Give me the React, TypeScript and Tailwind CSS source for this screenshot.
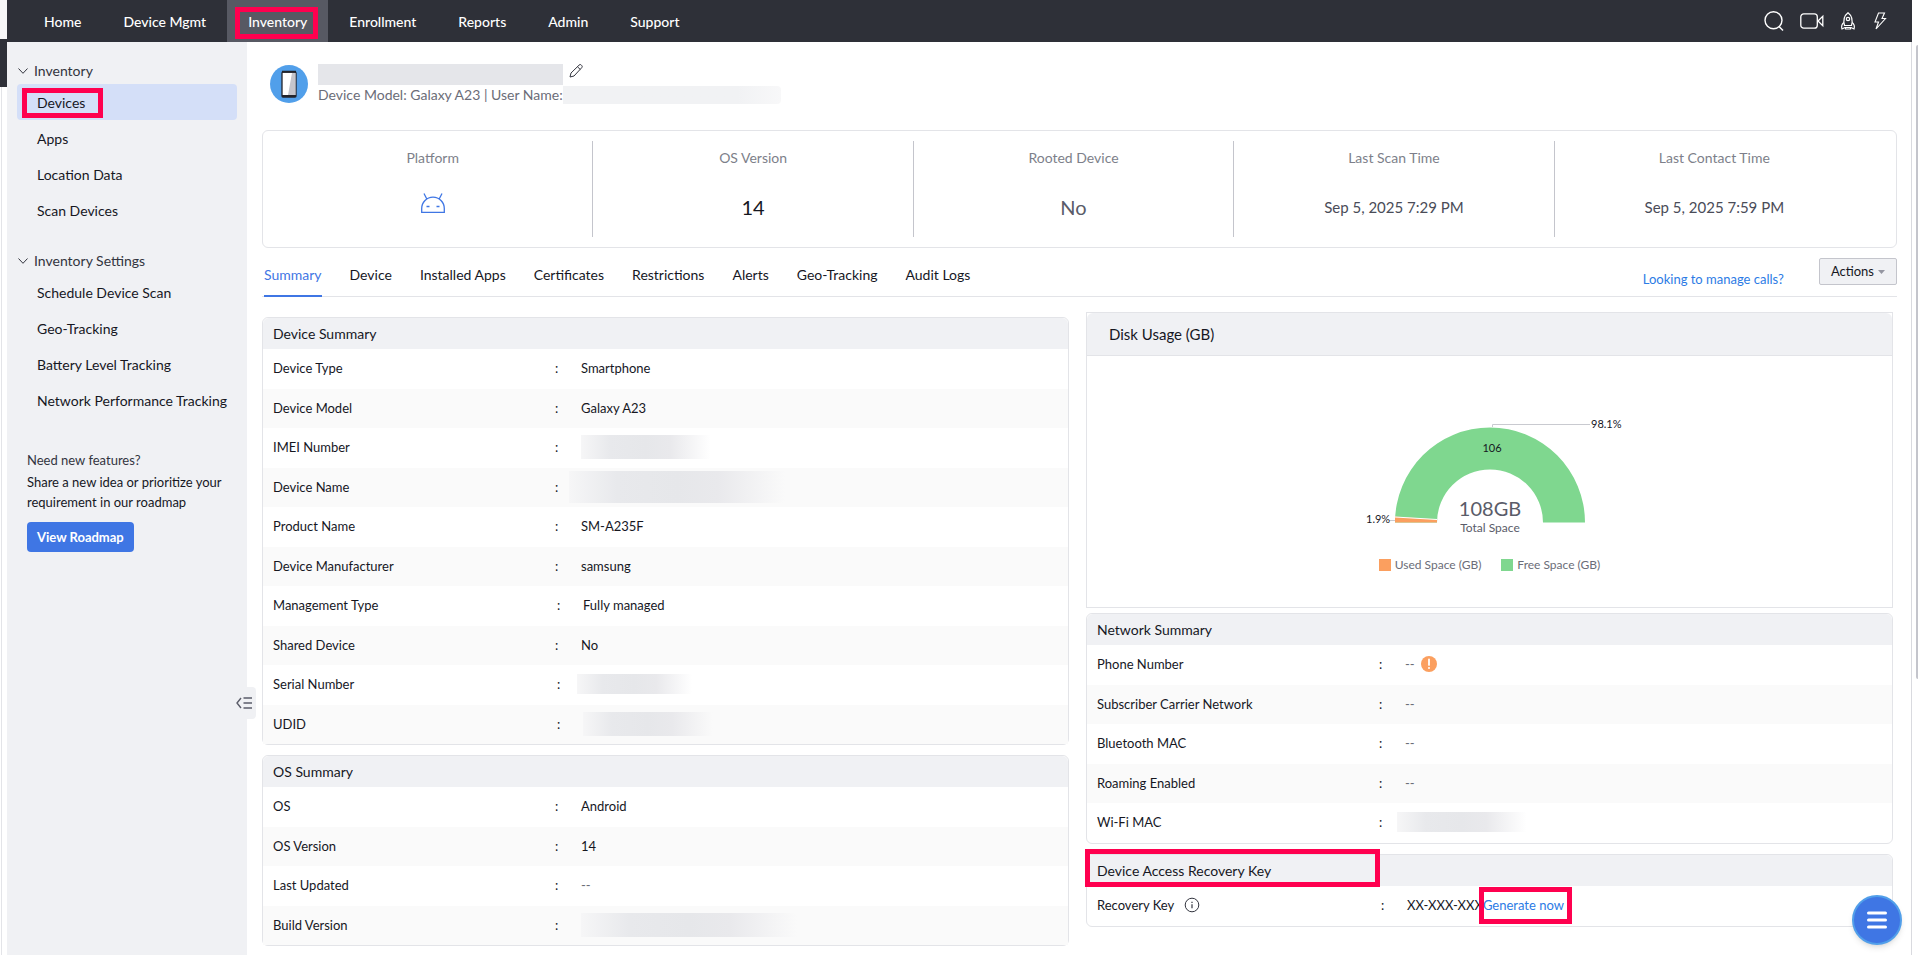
import { clsx } from "clsx";
import type { ReactNode } from "react";

const navItems = ["Home", "Device Mgmt", "Inventory", "Enrollment", "Reports", "Admin", "Support"];
const inventoryLinks = ["Devices", "Apps", "Location Data", "Scan Devices"];
const settingsLinks = ["Schedule Device Scan", "Geo-Tracking", "Battery Level Tracking", "Network Performance Tracking"];
const tabs = ["Summary", "Device", "Installed Apps", "Certificates", "Restrictions", "Alerts", "Geo-Tracking", "Audit Logs"];

type Row = { label: ReactNode; value: ReactNode; shifted?: boolean };

function Redacted({ className }: { className: string }) {
  return (
    <span
      className={clsx(
        "block bg-[linear-gradient(to_right,#f6f6f7,#e8e9ec_20%,#e6e7ea_45%,#e9e9ec_62%,transparent_90%)]",
        className
      )}
    />
  );
}

function Highlight({ className }: { className: string }) {
  return <span className={clsx("pointer-events-none absolute border-5 border-[#ff004f]", className)} />;
}

const dash = <span className="text-[#6b6d78]">--</span>;

const deviceRows: Row[] = [
  { label: "Device Type", value: "Smartphone" },
  { label: "Device Model", value: "Galaxy A23" },
  { label: "IMEI Number", value: <Redacted className="h-6 w-36" /> },
  { label: "Device Name", value: <Redacted className="-ml-3 h-8 w-60" /> },
  { label: "Product Name", value: "SM-A235F" },
  { label: "Device Manufacturer", value: "samsung" },
  { label: "Management Type", value: "Fully managed", shifted: true },
  { label: "Shared Device", value: "No" },
  { label: "Serial Number", value: <Redacted className="-ml-1.5 h-5 w-32" />, shifted: true },
  { label: "UDID", value: <Redacted className="h-6 w-36" />, shifted: true },
];

const osRows: Row[] = [
  { label: "OS", value: "Android" },
  { label: "OS Version", value: "14" },
  { label: "Last Updated", value: dash },
  { label: "Build Version", value: <Redacted className="h-6 w-60" /> },
];

const networkRows: Row[] = [
  {
    label: "Phone Number",
    value: (
      <span className="flex items-center gap-1.5">
        {dash}
        <svg className="size-4" viewBox="0 0 16 16" aria-label="Warning">
          <circle cx="8" cy="8" r="8" fill="#fb9f5f" />
          <path d="M8 3.5v5.4" stroke="#fff" strokeWidth="1.8" strokeLinecap="round" />
          <circle cx="8" cy="12" r="1" fill="#fff" />
        </svg>
      </span>
    ),
  },
  { label: "Subscriber Carrier Network", value: dash },
  { label: "Bluetooth MAC", value: dash },
  { label: "Roaming Enabled", value: dash },
  { label: "Wi-Fi MAC", value: <Redacted className="-ml-2 h-5 w-36" /> },
];

const recoveryRows: Row[] = [
  {
    label: (
      <span className="flex items-center gap-2.5">
        Recovery Key
        <svg className="size-4" viewBox="0 0 16 16" fill="none" stroke="#33353f" aria-label="Info">
          <circle cx="8" cy="8" r="6.8" />
          <path d="M8 7.2v4M8 4.8v1.2" strokeWidth="1.2" />
        </svg>
      </span>
    ),
    value: (
      <span className="flex">
        XX-XXX-XXX
        <a href="#generate" className="relative text-[#2c7be5]">
          Generate now
          <Highlight className="-top-2 -right-2 -bottom-[9px] -left-1" />
        </a>
      </span>
    ),
    shifted: true,
  },
];

function InfoCard({ title, rows, highlighted }: { title: string; rows: Row[]; highlighted?: boolean }) {
  return (
    <section className="rounded-md border border-[#e3e4e8]">
      <h2 className="relative flex h-[31px] items-center rounded-t-md bg-[#f0f1f4] px-2.5 text-sm">
        {title}
        {highlighted && <Highlight className="-top-1.5 -left-0.5 h-[38px] w-[295px]" />}
      </h2>
      <table className="w-full table-fixed text-left text-[13px] leading-5">
        <tbody>
          {rows.map((row, i) => (
            <tr key={i} className="h-10 even:h-[39px] even:bg-[#fafafa]">
              <th scope="row" className="w-[290px] p-0 pb-0.5 pl-2.5 font-normal">{row.label}</th>
              <td className={clsx("w-7 p-0 pb-0.5", row.shifted ? "pl-1" : "pl-0.5")}>:</td>
              <td className={clsx("p-0 pb-0.5", row.shifted && "pl-0.5")}>{row.value}</td>
            </tr>
          ))}
        </tbody>
      </table>
    </section>
  );
}

function DiskUsage() {
  return (
    <section className="mb-[5px] border border-[#e3e4e8]">
      <h2 className="flex h-[43px] items-center rounded-t-md border-b border-[#e3e4e8] bg-[#f0f1f4] px-[22px] text-[15px]">
        Disk Usage (GB)
      </h2>
      <div className="flex h-[251px] flex-col items-center">
        <svg className="mt-[51px] h-[140px] w-[280px]" viewBox="0 0 280 140" fontFamily="Lato, sans-serif">
          <path d="M45 115.500A95 95 0 0 1 235 115.500H193A53 53 0 0 0 87 115.500Z" fill="#7fd78f" />
          <path d="M45 109.500L87 112.500V115.500H45Z" fill="#fb9f5f" />
          <path d="M45 110L87 112.500" stroke="#fff" strokeWidth="1" />
          <path d="M142.500 20v-2.500H240M39 113.500h6" fill="none" stroke="#c9cad0" />
          <text x="241" y="21" fontSize="11" fill="#16171f">98.1%</text>
          <text x="142" y="45" fontSize="11" fill="#16171f" textAnchor="middle">106</text>
          <text x="16" y="116" fontSize="11" fill="#16171f">1.9%</text>
          <text x="140" y="109" fontSize="20" fill="#5a5c69" textAnchor="middle">108GB</text>
          <text x="140" y="125" fontSize="12" fill="#5a5c69" textAnchor="middle">Total Space</text>
        </svg>
        <div className="mt-2.5 flex gap-5 text-xs text-[#6b6d78]">
          <span className="flex items-center gap-1">
            <i className="size-3 bg-[#fb9f5f]" />
            Used Space (GB)
          </span>
          <span className="flex items-center gap-1">
            <i className="size-3 bg-[#7fd78f]" />
            Free Space (GB)
          </span>
        </div>
      </div>
    </section>
  );
}

function SideSection({ title, links, active }: { title: string; links: string[]; active?: string }) {
  return (
    <div>
      <button className="flex h-[26px] items-center gap-1.5 pl-[11px] text-sm text-[#33353f]">
        <svg className="w-2.5" viewBox="0 0 10 6" fill="none" stroke="currentColor">
          <path d="M.5 .5L5 5.300L9.500 .5" />
        </svg>
        {title}
      </button>
      {links.map((link) => (
        <a
          key={link}
          href="#"
          className={clsx("mx-2.5 flex h-9 items-center rounded pt-0.5 pl-5 text-sm whitespace-nowrap", link === active && "bg-[#d4dff8]")}
        >
          <span className="relative">
            {link}
            {link === active && <Highlight className="-top-[5px] -right-[18px] -bottom-[5px] -left-[15px]" />}
          </span>
        </a>
      ))}
    </div>
  );
}

function Stat({ label, children, last }: { label: string; children: ReactNode; last?: boolean }) {
  return (
    <div className={clsx("flex h-24 flex-1 flex-col items-center", !last && "border-r border-[#c4c5cc]")}>
      <span className="mt-[7px] text-sm text-[#7d7f8a]">{label}</span>
      <div className="mt-[23px] flex h-8 items-center">{children}</div>
    </div>
  );
}

export default function App() {
  return (
    <div className="relative flex min-h-screen font-['Lato',sans-serif] text-[#16171f]">
      {/* Edge of the window behind */}
      <div className="flex w-[7px] flex-col">
        <div className="h-[39px] bg-[#f7f7f8]" />
        <div className="h-12 bg-[#2e3038]" />
        <div className="ml-px w-px flex-1 bg-[#e3e4e8]" />
      </div>

      <div className="flex flex-1 flex-col">
        {/* Top bar */}
        <header className="flex h-[42px] items-center justify-between bg-[#2e3038] pr-6 pl-4">
          <nav className="flex h-full">
            {navItems.map((item) => (
              <a
                key={item}
                href="#"
                className={clsx(
                  "relative flex items-center px-[21px] pt-0.5 text-sm font-medium text-white",
                  item === "Inventory" && "bg-[#575963]"
                )}
              >
                {item}
                {item === "Inventory" && <Highlight className="top-[7px] right-2.5 bottom-[3px] left-2" />}
              </a>
            ))}
          </nav>
          <div className="flex items-center gap-4 text-white">
            <button aria-label="Search">
              <svg className="size-5" viewBox="0 0 20 20" fill="none" stroke="currentColor" strokeWidth="1.4">
                <circle cx="9.500" cy="9.300" r="8.500" />
                <path d="M15 15.500L19 19.500" />
              </svg>
            </button>
            <button aria-label="Video">
              <svg className="h-4 w-6" viewBox="0 0 24 16" fill="none" stroke="currentColor" strokeWidth="1.3">
                <rect x=".8" y=".8" width="16.500" height="14.400" rx="3" />
                <path d="M18 8l4.800-4.800v9.600z" />
              </svg>
            </button>
            <button aria-label="What's new">
              <svg className="h-[18px] w-4" viewBox="0 0 16 18" fill="none" stroke="currentColor" strokeWidth="1.2">
                <path d="M4.500 13.500C3 8 4.500 3.500 8 .8c3.500 2.700 5 7.200 3.500 12.700z" />
                <circle cx="8" cy="7" r="1.700" />
                <path d="M3.800 10.500C2 12 1.200 14.500 2 17l3-1.500h6l3 1.500c.8-2.500 0-5-1.800-6.500M5.500 15.500V17h5v-1.500" />
              </svg>
            </button>
            <button aria-label="Quick actions">
              <svg className="h-[18px] w-4" viewBox="0 0 16 18" fill="none" stroke="currentColor" strokeWidth="1.100">
                <path d="M6.500 1h6l-2.500 5.500h3.500L4 17l2.500-7H3z" />
              </svg>
            </button>
          </div>
        </header>

        <div className="flex flex-1">
          {/* Side menu */}
          <aside className="relative flex w-60 shrink-0 flex-col bg-[#f0f1f4] pt-4">
            <SideSection title="Inventory" links={inventoryLinks} active="Devices" />
            <div className="mt-5">
              <SideSection title="Inventory Settings" links={settingsLinks} />
            </div>
            <div className="mt-8 px-5 text-[13px] leading-5">
              <p className="text-[#33353f]">Need new features?</p>
              <p className="mt-0.5">Share a new idea or prioritize your requirement in our roadmap</p>
              <button className="mt-2.5 h-[30px] rounded bg-[#3f76e4] px-2.5 font-bold text-white">View Roadmap</button>
            </div>
            <button aria-label="Collapse menu" className="absolute top-[645px] -right-[9px] flex h-8 w-6 items-center justify-center rounded-r bg-[#f0f1f4]">
              <svg className="h-3 w-4" viewBox="0 0 16 12" fill="none" stroke="#5a5c69" strokeWidth="1.400">
                <path d="M5 1L1 6l4 5M7.500 1H16M7.500 6H16M7.500 11H16" />
              </svg>
            </button>
          </aside>

          <main className="flex-1 border-r border-[#d9dadf] pr-3.5 pl-[15px]">
            {/* Device heading */}
            <div className="flex h-[88px] items-center gap-2.5 pb-1 pl-2">
              <svg className="size-[38px]" viewBox="0 0 38 38">
                <circle cx="19" cy="19" r="19" fill="#519fea" />
                <rect x="12" y="7" width="14" height="25" rx="1" fill="#fff" stroke="#22242c" strokeWidth="1.300" />
                <path d="M22 8h3.500v22H18z" fill="#c4c5cc" />
                <path d="M12 6.800h14M12 31h14" stroke="#22242c" strokeWidth="2" />
              </svg>
              <div className="flex flex-col">
                <div className="flex items-start gap-1.5">
                  <div className="h-[21px] w-[245px] bg-[#e5e6ea]" />
                  <button aria-label="Rename">
                    <svg className="size-3.5" viewBox="0 0 14 14" fill="none" stroke="#33353f">
                      <path d="M1 13l1-4L10 1.200a1.500 1.500 0 0 1 2.400 0l.4 .4a1.500 1.500 0 0 1 0 2L5 12zM8.500 2.800L11.300 5.500" />
                    </svg>
                  </button>
                </div>
                <div className="flex items-center text-sm leading-5 text-[#6b6d78]">
                  Device Model: Galaxy A23 | User Name:
                  <span className="h-[18px] w-[218px] rounded-r bg-linear-to-r from-[#f1f2f4] from-80% to-[#f8f8f9]" />
                </div>
              </div>
            </div>

            {/* Overview */}
            <div className="flex h-[118px] items-center rounded-md border border-[#e3e4e8] pr-[22px] pl-2.5">
              <Stat label="Platform">
                <svg className="mb-2 h-5 w-6" viewBox="0 0 24 20" fill="none" stroke="#3f76e4" strokeWidth="1.300">
                  <path d="M.7 19.300V15.500a11.300 11.300 0 0 1 22.600 0v3.800zM5.800 6L3 .5M18.200 6L21 .5M5.500 13.500h3M15.500 13.500h3" />
                </svg>
              </Stat>
              <Stat label="OS Version"><span className="text-xl">14</span></Stat>
              <Stat label="Rooted Device"><span className="text-xl text-[#5a5c69]">No</span></Stat>
              <Stat label="Last Scan Time"><span className="text-[15px] text-[#4a4c58]">Sep 5, 2025 7:29 PM</span></Stat>
              <Stat label="Last Contact Time" last><span className="text-[15px] text-[#4a4c58]">Sep 5, 2025 7:59 PM</span></Stat>
            </div>

            {/* Tabs */}
            <div className="flex h-[49px] items-end justify-between border-b border-[#e3e4e8]">
              <nav className="flex gap-7 pl-0.5">
                {tabs.map((tab) => (
                  <a
                    key={tab}
                    href="#"
                    className={clsx(
                      "-mb-px flex h-8 items-start border-b-2 text-sm",
                      tab === "Summary" ? "border-[#3f76e4] text-[#3f76e4]" : "border-transparent"
                    )}
                  >
                    {tab}
                  </a>
                ))}
              </nav>
              <div className="flex items-end gap-[35px] pb-[11px]">
                <a href="#calls" className="text-[13px] leading-3 text-[#2c7be5]">Looking to manage calls?</a>
                <button className="flex h-[27px] items-center gap-1 rounded-xs border border-[#c4c5cc] bg-[#f0f1f4] px-[11px] text-[13px]">
                  Actions
                  <svg className="h-1 w-[7px]" viewBox="0 0 7 4" fill="#9496a1"><path d="M0 0h7L3.500 4z" /></svg>
                </button>
              </div>
            </div>

            <div className="flex items-start gap-[17px] pr-1">
              <div className="mt-5 flex flex-1 flex-col gap-2.5">
                <InfoCard title="Device Summary" rows={deviceRows} />
                <InfoCard title="OS Summary" rows={osRows} />
              </div>
              <div className="mt-[15px] flex flex-1 flex-col">
                <DiskUsage />
                <InfoCard title="Network Summary" rows={networkRows} />
                <div className="mt-2.5">
                  <InfoCard title="Device Access Recovery Key" rows={recoveryRows} highlighted />
                </div>
              </div>
            </div>
          </main>
        </div>
      </div>

      {/* Page scroll edge */}
      <div className="w-1.5" />
      <div className="absolute top-[45px] right-0 h-[634px] w-0.5 rounded-l bg-[#c4c5cc]" />

      <button
        aria-label="Open menu"
        className="absolute right-4 bottom-2.5 flex size-[50px] items-center justify-center rounded-full border-2 border-[#519fea] bg-[#3f76e4] shadow-md"
      >
        <svg className="h-[18px] w-5" viewBox="0 0 20 18" stroke="#fff" strokeWidth="3" strokeLinecap="round">
          <path d="M1.500 2h17M1.500 9h17M1.500 16h17" />
        </svg>
      </button>
    </div>
  );
}
